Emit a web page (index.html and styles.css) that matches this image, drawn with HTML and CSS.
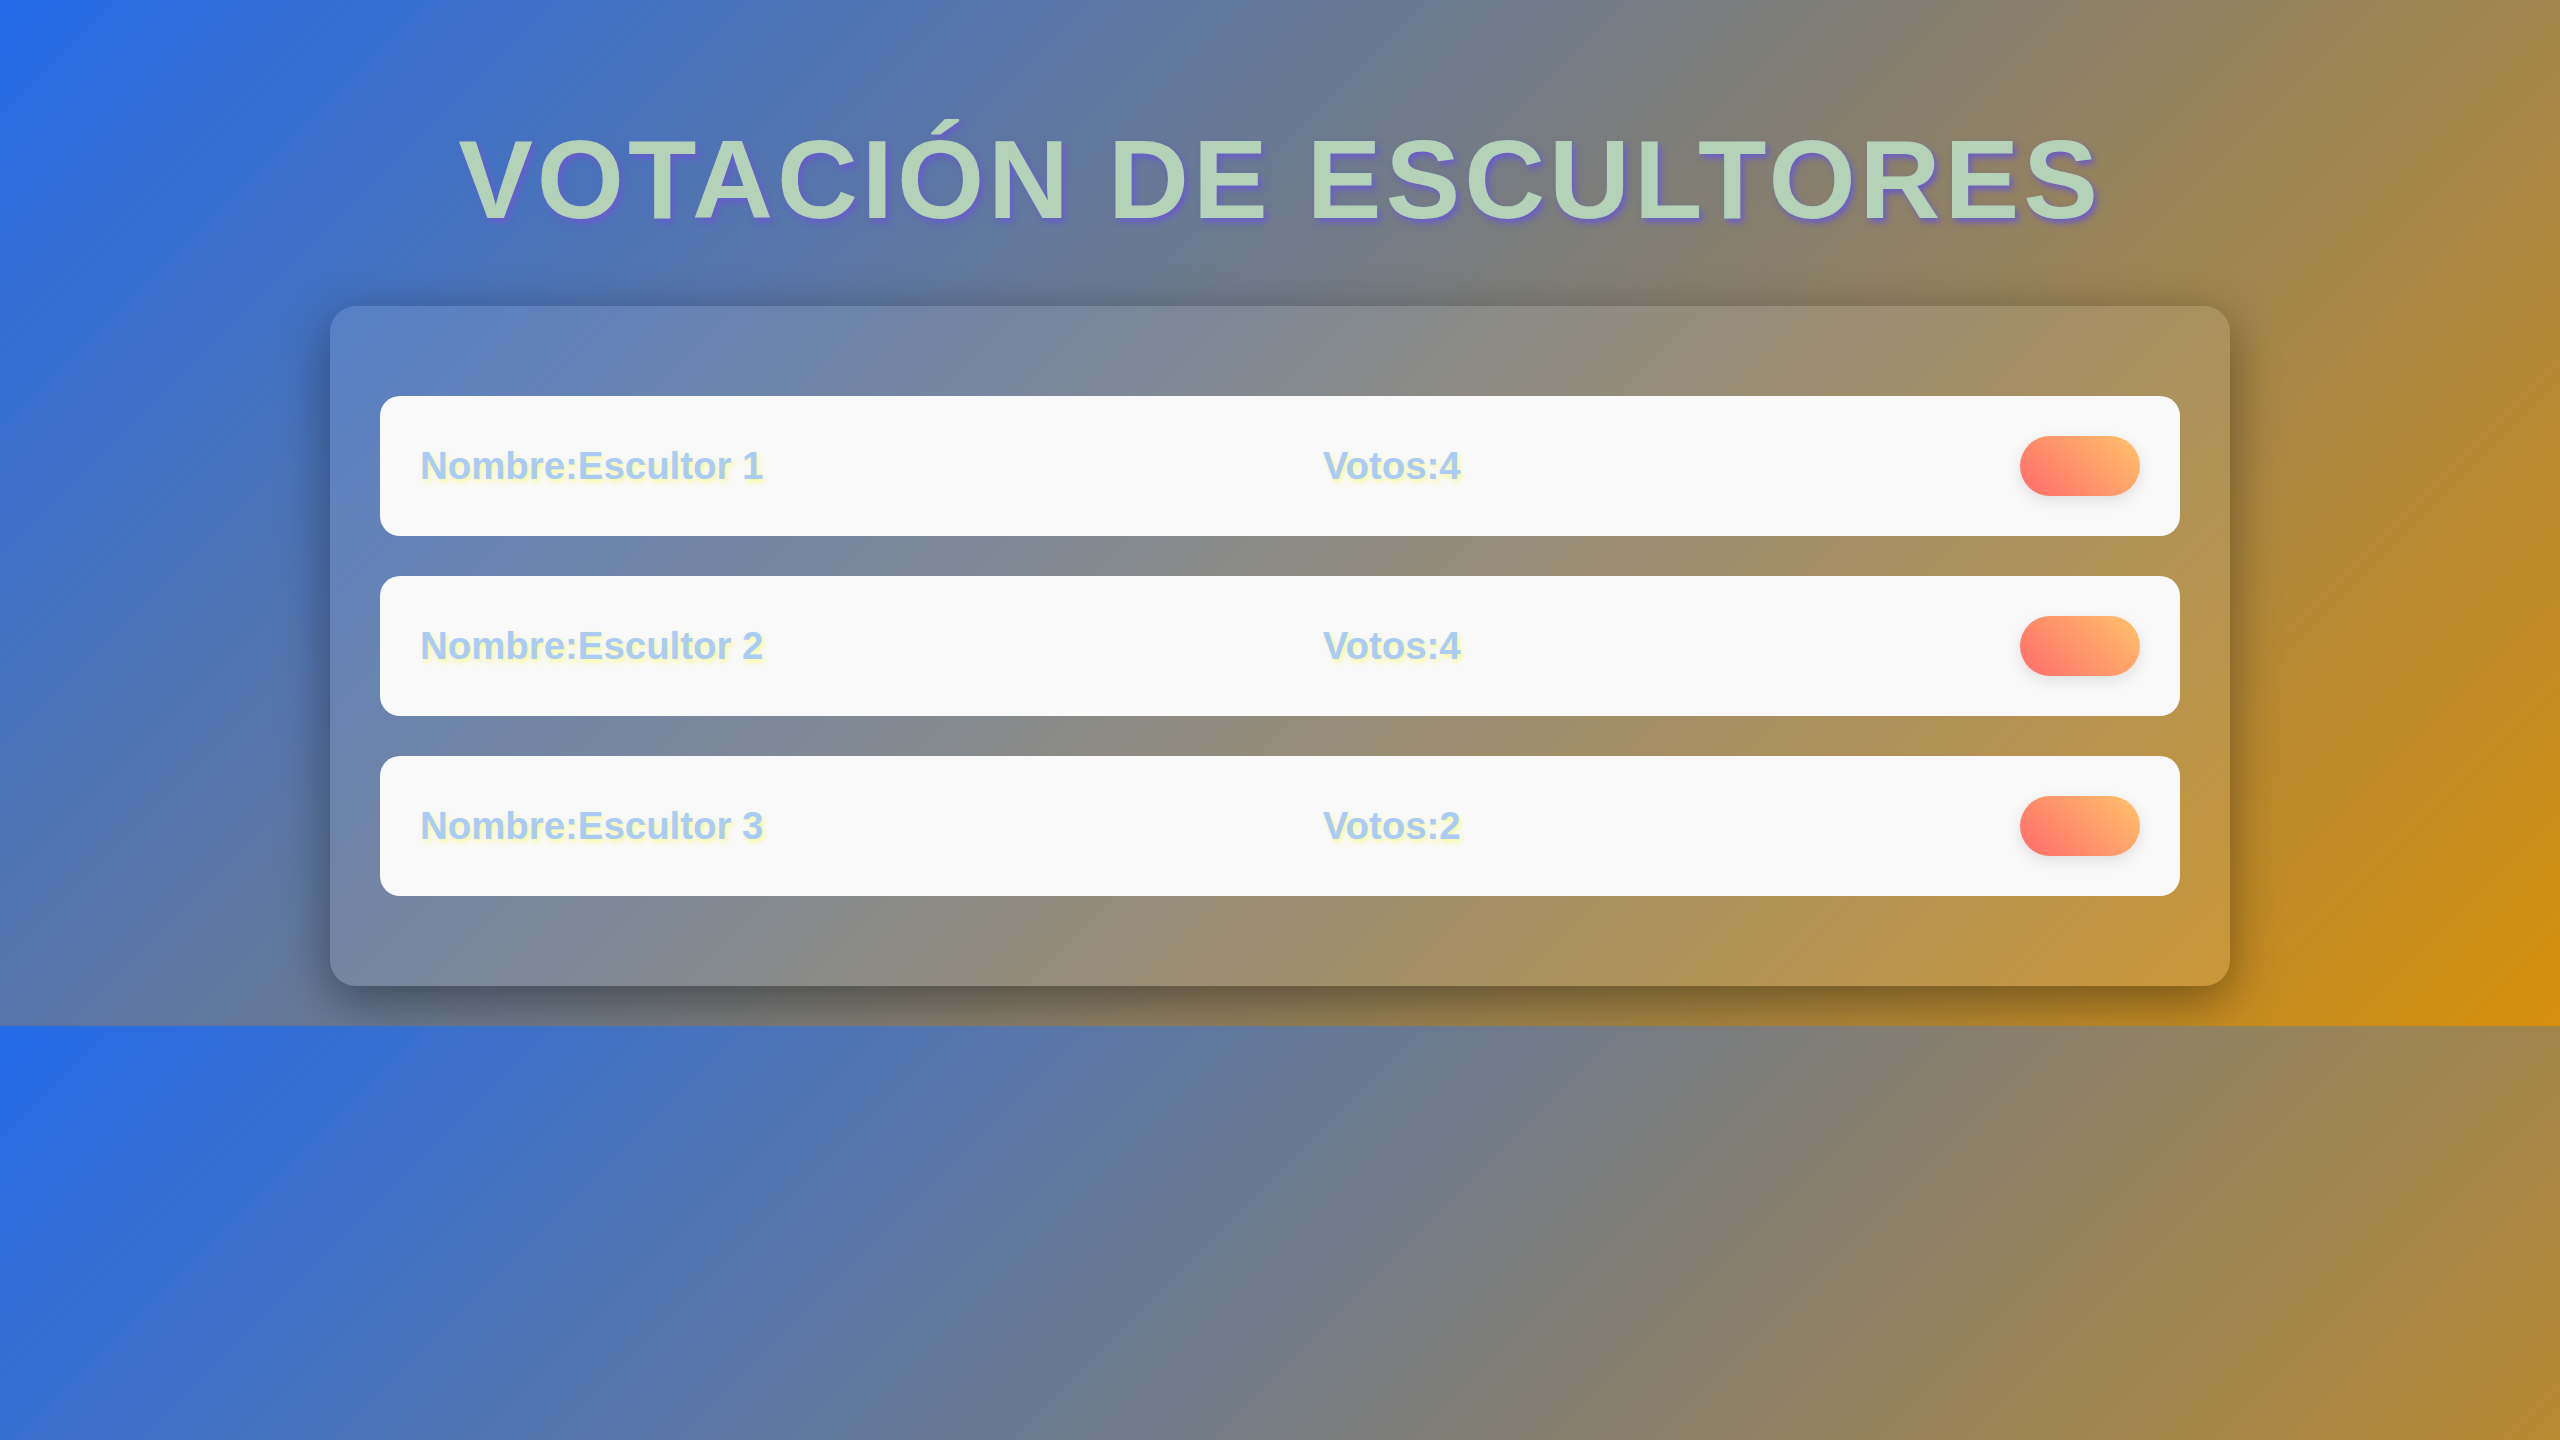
FILE: index.html
```html
<!DOCTYPE html>
<html lang="es">
<head>
<meta charset="utf-8">
<title>Votación de escultores</title>
<link rel="stylesheet" href="styles.css">
</head>
<body>
  <h1 class="title">VOTACIÓN DE ESCULTORES</h1>
  <div class="board">
    <div class="row">
      <span class="label">Nombre:Escultor 1</span>
      <span class="label">Votos:4</span>
      <button class="vote" type="button"></button>
    </div>
    <div class="row">
      <span class="label">Nombre:Escultor 2</span>
      <span class="label">Votos:4</span>
      <button class="vote" type="button"></button>
    </div>
    <div class="row">
      <span class="label">Nombre:Escultor 3</span>
      <span class="label">Votos:2</span>
      <button class="vote" type="button"></button>
    </div>
  </div>
</body>
</html>
```
FILE: styles.css
```css
html {
  background: linear-gradient(135deg, #246be9 0%, #d6900c 100%);
  background-size: 100% 1026px;
  background-repeat: repeat;
}

body {
  margin: 0;
  padding: 0 0 40px;
  font-family: "Liberation Sans", Arial, sans-serif;
}

.title {
  margin: 0;
  padding: 116px 0 61px;
  text-align: center;
  font-size: 112px;
  line-height: 1.15;
  font-weight: 700;
  letter-spacing: 4px;
  color: #b4d2b8;
  text-shadow: 3px 4px 6px rgba(106, 90, 205, 0.95);
}

.board {
  width: 1900px;
  box-sizing: border-box;
  margin: 0 auto;
  padding: 50px;
  border-radius: 26px;
  background: rgba(255, 255, 255, 0.1);
  box-shadow: 0 15px 50px rgba(0, 0, 0, 0.4);
}

.row {
  display: flex;
  align-items: center;
  justify-content: space-between;
  margin: 40px 0;
  padding: 40px;
  background: #f9f9f9;
  border-radius: 20px;
}

.label {
  font-size: 38.4px;
  font-weight: 700;
  line-height: 1.15;
  color: #aacbf4;
  text-shadow: 2px 3px 5px rgba(250, 250, 140, 0.9);
}

.vote {
  width: 120px;
  height: 60px;
  border: none;
  border-radius: 30px;
  padding: 0;
  background: linear-gradient(45deg, #ff6b6b, #ffc36b);
  box-shadow: 0 5px 15px rgba(0, 0, 0, 0.1);
}
```
